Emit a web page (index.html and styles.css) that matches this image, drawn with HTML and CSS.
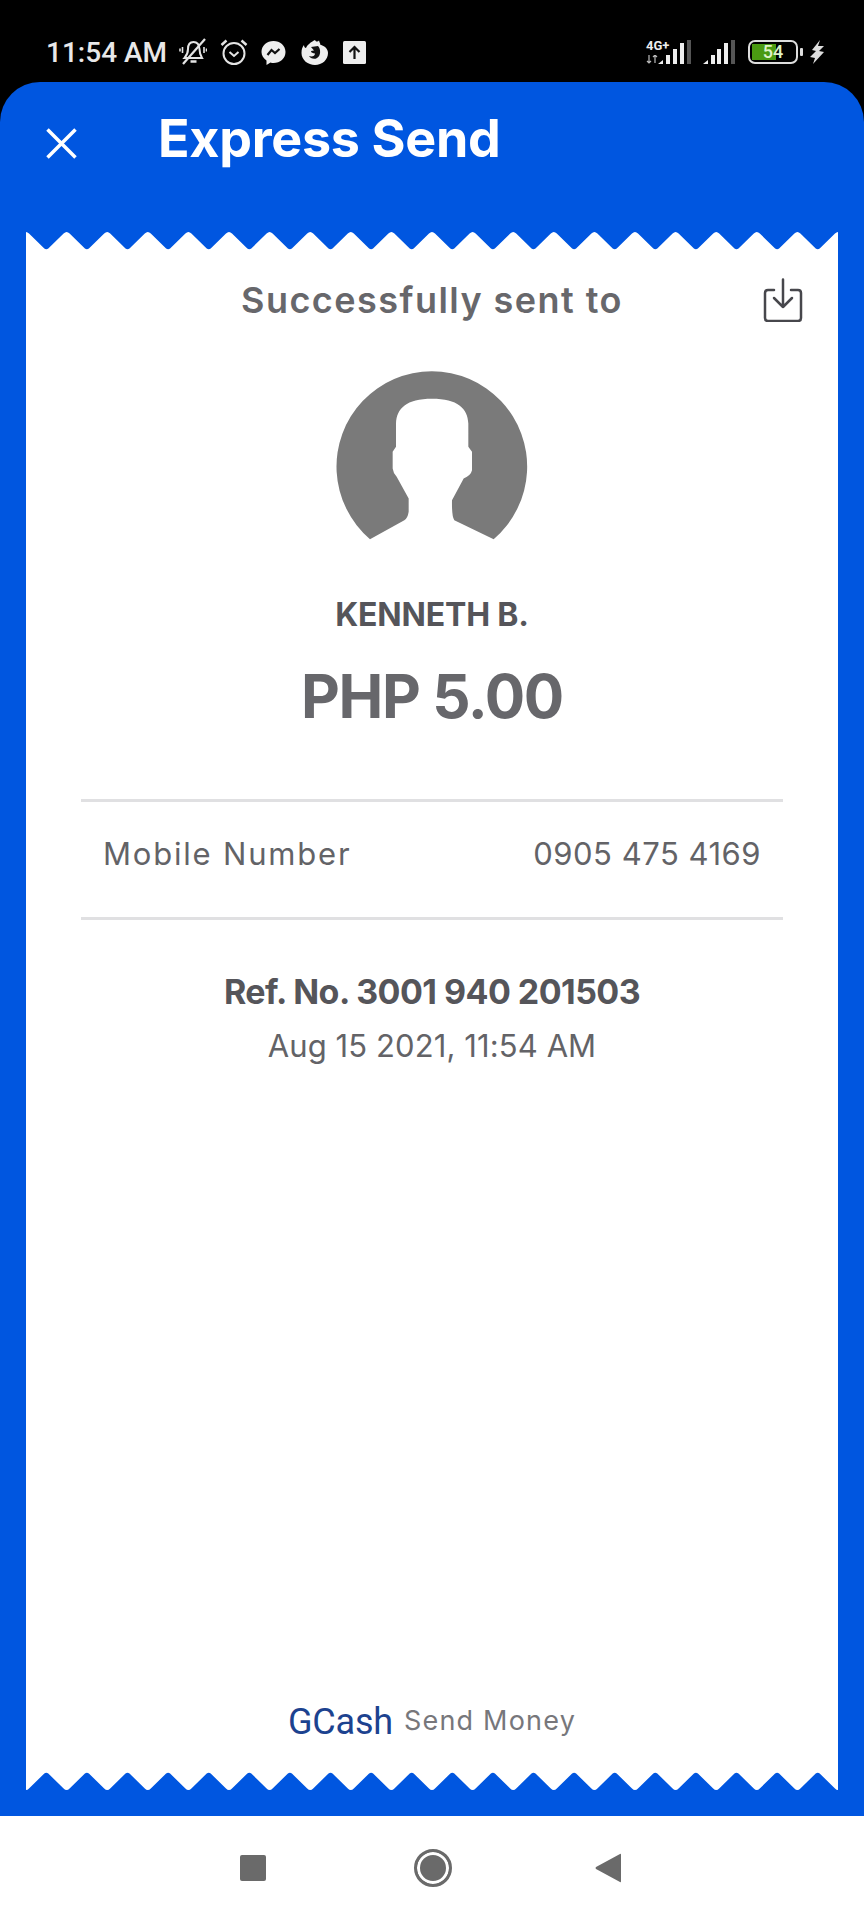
FILE: index.html
```html
<!DOCTYPE html>
<html lang="en">
<head>
<meta charset="utf-8">
<title>Express Send</title>
<link rel="stylesheet" href="styles.css">
</head>
<body>
<div class="phone">
  <div class="status">
    <span class="time">11:54 AM</span>
    <svg class="si" width="28" height="28" viewBox="0 0 28 28" fill="none" stroke="#e4e4e4" stroke-width="2"><path d="M5.500 20 Q9 16 9 11 Q9 4 14.500 4 Q20 4 20.500 11 Q20.500 16 23 20 Z"/><path d="M11.500 23.500 H17.500" stroke-width="2.500"/><path d="M26 1 L4 26" stroke-width="2.200"/><path d="M3.500 9 V15 M1 10.500 V13.500 M25 9 V15 M27.500 10.500 V13.500" stroke-width="1.600"/></svg>
    <svg class="si" width="28" height="28" viewBox="0 0 28 28" fill="none" stroke="#e4e4e4" stroke-width="2"><circle cx="14" cy="15.500" r="10.500"/><path d="M9.500 14 L14 18 L18.500 14"/><path d="M1.500 7 L6.500 2.500 M26.500 7 L21.500 2.500" stroke-width="2.500"/></svg>
    <svg class="si wide" width="25" height="25" viewBox="0 0 25 25"><path fill="#eee" d="M12.500 1 C19 1 24.500 5.500 24.500 12 C24.500 18.500 19 23 12.500 23 Q11 23 9.500 22.500 L5.500 25 V20.500 C2.500 18.500 .5 15.500 .5 12 C.5 5.500 6 1 12.500 1 Z"/><path fill="none" stroke="#111" stroke-width="2.200" d="M6.500 15 L10.500 10 L14 13 L18.500 9"/></svg>
    <svg class="si" width="27" height="27" viewBox="0 0 27 27"><path fill="#eee" d="M14 1 C15 3 17 3 18 1.500 C18.500 4 20 5 19 5.500 C24 7 27 10 27 14 C27 21 21 26 14 26 C7 26 .5 21 .5 14 C.5 10 1.500 8 3 6 C3 8 4 9 5 9 C6 6 10 3 14 1 Z"/><path fill="#111" d="M10 8 L17 7 C20 10 20 17 16 19 C13 21 9 19 8 17 C11 18 14 17 14 14.500 C12 14 10 14 10 12 L13 11.500 Z"/></svg>
    <svg class="si up" width="23" height="23" viewBox="0 0 23 23"><rect width="23" height="23" rx="1.500" fill="#eee"/><path fill="none" stroke="#111" stroke-width="2.200" d="M11.500 18 V6.500 M6.500 11 L11.500 6 L16.500 11"/></svg>
    <span class="status-right">
      <span class="net">
        <span class="g4">4G+</span>
        <svg class="netarrows" width="13" height="9" viewBox="0 0 13 9" fill="none" stroke="#bbb" stroke-width="1.200"><path d="M3 0 V8 M1 6 L3 8 L5 6 M9 8 V0 M7 2 L9 0 L11 2"/></svg>
      </span>
      <svg class="bars" width="34" height="24" viewBox="0 0 34 24"><path fill="#eee" d="M0 24 L5 20 V24 Z"/><rect x="8" y="15" width="4" height="9" fill="#eee"/><rect x="15" y="9" width="4" height="15" fill="#eee"/><rect x="22" y="3" width="4" height="21" fill="#eee"/><rect x="29" y="0" width="4" height="24" fill="#555"/></svg>
      <svg class="bars second" width="32" height="24" viewBox="0 0 32 24"><path fill="#eee" d="M0 24 L5 20 V24 Z"/><rect x="8" y="15" width="4" height="9" fill="#eee"/><rect x="14" y="9" width="4" height="15" fill="#eee"/><rect x="21" y="3" width="4" height="21" fill="#eee"/><rect x="28" y="0" width="4" height="24" fill="#555"/></svg>
      <span class="battery"><span class="batt-num">54</span></span>
      <span class="batt-tip"></span>
      <svg class="bolt" width="14" height="24" viewBox="0 0 14 24"><path fill="#ddd" d="M10 0 L2 10 L6 11 L0 17 L5 18 L3 24 L14 12 L9 11 L14 6 L8 6 Z"/></svg>
    </span>
  </div>

  <main class="panel">
    <header class="topbar">
      <svg class="close" width="31" height="31" viewBox="0 0 31 31" fill="none" stroke="#fff" stroke-width="3.500"><path d="M1.500 1.500 L29.500 29.500 M29.500 1.500 L1.500 29.500"/></svg>
      <h1 class="title">Express Send</h1>
    </header>

    <section class="receipt">
      <svg class="teeth" width="812" height="18" viewBox="0 0 812 18"><rect width="812" height="18" fill="#fff"/><path id="toothEdge" fill="#0056e0" d="M0 0 q1.500 0 3 1.500 l15.300 15 q2 1.500 4 0 l15.300 -15 q1.500 -1.500 3 -1.500 q1.500 0 3 1.500 l15.300 15 q2 1.500 4 0 l15.300 -15 q1.500 -1.500 3 -1.500 q1.500 0 3 1.500 l15.300 15 q2 1.500 4 0 l15.300 -15 q1.500 -1.500 3 -1.500 q1.500 0 3 1.500 l15.300 15 q2 1.500 4 0 l15.300 -15 q1.500 -1.500 3 -1.500 q1.500 0 3 1.500 l15.300 15 q2 1.500 4 0 l15.300 -15 q1.500 -1.500 3 -1.500 q1.500 0 3 1.500 l15.300 15 q2 1.500 4 0 l15.300 -15 q1.500 -1.500 3 -1.500 q1.500 0 3 1.500 l15.300 15 q2 1.500 4 0 l15.300 -15 q1.500 -1.500 3 -1.500 q1.500 0 3 1.500 l15.300 15 q2 1.500 4 0 l15.300 -15 q1.500 -1.500 3 -1.500 q1.500 0 3 1.500 l15.300 15 q2 1.500 4 0 l15.300 -15 q1.500 -1.500 3 -1.500 q1.500 0 3 1.500 l15.300 15 q2 1.500 4 0 l15.300 -15 q1.500 -1.500 3 -1.500 q1.500 0 3 1.500 l15.300 15 q2 1.500 4 0 l15.300 -15 q1.500 -1.500 3 -1.500 q1.500 0 3 1.500 l15.300 15 q2 1.500 4 0 l15.300 -15 q1.500 -1.500 3 -1.500 q1.500 0 3 1.500 l15.300 15 q2 1.500 4 0 l15.300 -15 q1.500 -1.500 3 -1.500 q1.500 0 3 1.500 l15.300 15 q2 1.500 4 0 l15.300 -15 q1.500 -1.500 3 -1.500 q1.500 0 3 1.500 l15.300 15 q2 1.500 4 0 l15.300 -15 q1.500 -1.500 3 -1.500 q1.500 0 3 1.500 l15.300 15 q2 1.500 4 0 l15.300 -15 q1.500 -1.500 3 -1.500 q1.500 0 3 1.500 l15.300 15 q2 1.500 4 0 l15.300 -15 q1.500 -1.500 3 -1.500 q1.500 0 3 1.500 l15.300 15 q2 1.500 4 0 l15.300 -15 q1.500 -1.500 3 -1.500 q1.500 0 3 1.500 l15.300 15 q2 1.500 4 0 l15.300 -15 q1.500 -1.500 3 -1.500 q1.500 0 3 1.500 l15.300 15 q2 1.500 4 0 l15.300 -15 q1.500 -1.500 3 -1.500 q1.500 0 3 1.500 l15.300 15 q2 1.500 4 0 l15.300 -15 q1.500 -1.500 3 -1.500 Z"/></svg>

      <div class="receipt-body">
        <div class="sent-row">
          <span></span>
          <h2 class="sent">Successfully sent to</h2>
          <svg class="save" width="40" height="44" viewBox="0 0 40 44" fill="none" stroke="#47474c" stroke-width="2.500" stroke-linecap="round" stroke-linejoin="round"><path d="M11 12 H5 Q2 12 2 15 V40 Q2 43 5 43 H35 Q38 43 38 40 V15 Q38 12 35 12 H28"/><path d="M20 1.500 V29 M11 20 L20 29 L29 20"/></svg>
        </div>

        <svg class="avatar" width="192" height="171" viewBox="170 93 576 512"><path fill="#7a7a7a" d="M272 597 A286 286 0 1 1 643 597 L525 540 Q517 530 518 480 L553 415 Q575 405 578 390 L578 335 L567 320 L567 250 C565 205 535 176 458 176 C381 176 352 205 350 250 L350 320 L340 335 L340 385 Q342 400 352 410 L388 475 L388 515 Q385 535 375 540 Z"/></svg>

        <p class="name">KENNETH B.</p>
        <p class="amount">PHP 5.00</p>

        <div class="detail">
          <span class="detail-label">Mobile Number</span>
          <span class="detail-value">0905 475 4169</span>
        </div>

        <p class="ref">Ref. No. 3001 940 201503</p>
        <p class="date">Aug 15 2021, 11:54 AM</p>

        <div class="brand">
          <span class="gcash">GCash</span>
          <span class="send-money">Send Money</span>
        </div>
      </div>

      <svg class="teeth flip" width="812" height="18" viewBox="0 0 812 18"><rect width="812" height="18" fill="#fff"/><use href="#toothEdge"/></svg>
    </section>
  </main>

  <nav class="navbar">
    <span class="nav-square"></span>
    <span class="nav-home"></span>
    <svg class="nav-back" width="26" height="30" viewBox="0 0 26 30"><path fill="#6a6a6a" d="M25 1 Q26 0 26 2 V28 Q26 30 25 29 L1 16 Q0 15 1 14 Z"/></svg>
  </nav>
</div>
</body>
</html>
```
FILE: styles.css
```css
* { box-sizing: border-box; }
html, body { margin: 0; padding: 0; }
body { background: #000; font-family: "Inter", "Liberation Sans", sans-serif; }
h1, h2, p { margin: 0; font-weight: inherit; }

.phone { width: 864px; height: 1920px; display: flex; flex-direction: column; background: #000; }

/* status bar */
.status { height: 82px; flex: none; display: flex; align-items: center; padding: 22px 40px 0 46px; color: #e8e8e8; }
.time { font-family: "Roboto", sans-serif; font-weight: 500; font-size: 28px; letter-spacing: 0; width: 133px; }
.si { flex: none; margin-right: 13px; }
.si.wide { margin-right: 15px; }
.si.up { margin-right: 0; margin-left: 2px; }
.status-right { margin-left: auto; display: flex; align-items: flex-end; height: 24px; }
.net { width: 24px; display: flex; flex-direction: column; margin-right: -12px; align-self: stretch; justify-content: space-between; }
.g4 { font-family: "Roboto", sans-serif; font-weight: 700; font-size: 13px; line-height: 12px; color: #eee; }
.netarrows { display: block; }
.bars { display: block; }
.bars.second { margin-left: 11px; }
.battery { width: 50px; height: 24px; margin-left: 13px; border: 2.500px solid #ddd; border-radius: 7px; display: flex; align-items: center; justify-content: center; background: linear-gradient(90deg, #4a9a12 0 58%, transparent 58%) 2px 2px / calc(100% - 4px) calc(100% - 4px) no-repeat; }
.batt-num { font-family: "Roboto", sans-serif; font-size: 18px; font-weight: 500; color: #dff3c8; line-height: 1; }
.batt-tip { width: 3px; height: 8px; margin: 0 7px 8px 2px; background: #ddd; border-radius: 1px; }
.bolt { display: block; }

/* blue panel */
.panel { flex: 1; background: #0056e0; border-radius: 40px 40px 0 0; padding: 0 26px 26px; display: flex; flex-direction: column; }
.topbar { height: 150px; flex: none; display: flex; align-items: flex-start; margin-left: 20px; padding-top: 27px; }
.close { margin-top: 19px; flex: none; }
.title { margin-left: 81px; font-size: 52px; line-height: 60px; font-weight: 700; color: #fff; letter-spacing: -.3px; white-space: nowrap; }

/* receipt */
.receipt { flex: 1; display: flex; flex-direction: column; }
.teeth { display: block; flex: none; }
.teeth.flip { transform: scaleY(-1); }
.receipt-body { flex: 1; background: #fff; display: flex; flex-direction: column; align-items: center; padding: 28px 55px 0; color: #67676b; }
.sent-row { width: 100%; display: grid; grid-template-columns: 1fr auto 1fr; align-items: center; }
.sent { font-size: 36px; line-height: 44px; font-weight: 600; letter-spacing: 1.450px; white-space: nowrap; }
.save { justify-self: end; margin-right: -20px; }
.avatar { display: block; margin-top: 49px; }
.name { margin-top: 53px; font-size: 32px; line-height: 40px; font-weight: 700; color: #55555a; letter-spacing: -.2px; }
.amount { margin-top: 25px; font-size: 60px; line-height: 72px; font-weight: 700; letter-spacing: -1.400px; }
.detail { width: 100%; margin-top: 67px; height: 121px; border-top: 3px solid #e0e0e2; border-bottom: 3px solid #e0e0e2; display: flex; align-items: center; justify-content: space-between; padding: 0 22px 12px; font-size: 31px; color: #636367; }
.detail-label { letter-spacing: 1.800px; }
.detail-value { letter-spacing: .5px; }
.ref { margin-top: 51px; font-size: 34px; line-height: 42px; font-weight: 700; color: #55555a; letter-spacing: -.55px; }
.date { margin-top: 13px; font-size: 31px; line-height: 40px; color: #636367; letter-spacing: .1px; }
.brand { margin-top: auto; margin-bottom: 28px; display: flex; align-items: center; gap: 11px; }
.gcash { font-family: "Roboto", sans-serif; font-size: 36px; line-height: 44px; color: #1c428f; letter-spacing: -.2px; }
.send-money { font-size: 27px; color: #77777b; letter-spacing: 1.200px; margin-bottom: 4px; }

/* navigation */
.navbar { height: 104px; flex: none; background: #fff; display: flex; align-items: center; justify-content: center; padding-right: 3px; }
.nav-square { width: 26px; height: 26px; background: #6a6a6a; border-radius: 2px; margin-right: 147.500px; }
.nav-home { width: 38px; height: 38px; border-radius: 50%; background: #6a6a6a; border: 3px solid #6a6a6a; box-shadow: inset 0 0 0 3px #fff; margin-right: 143.500px; }
.nav-back { display: block; }
```
